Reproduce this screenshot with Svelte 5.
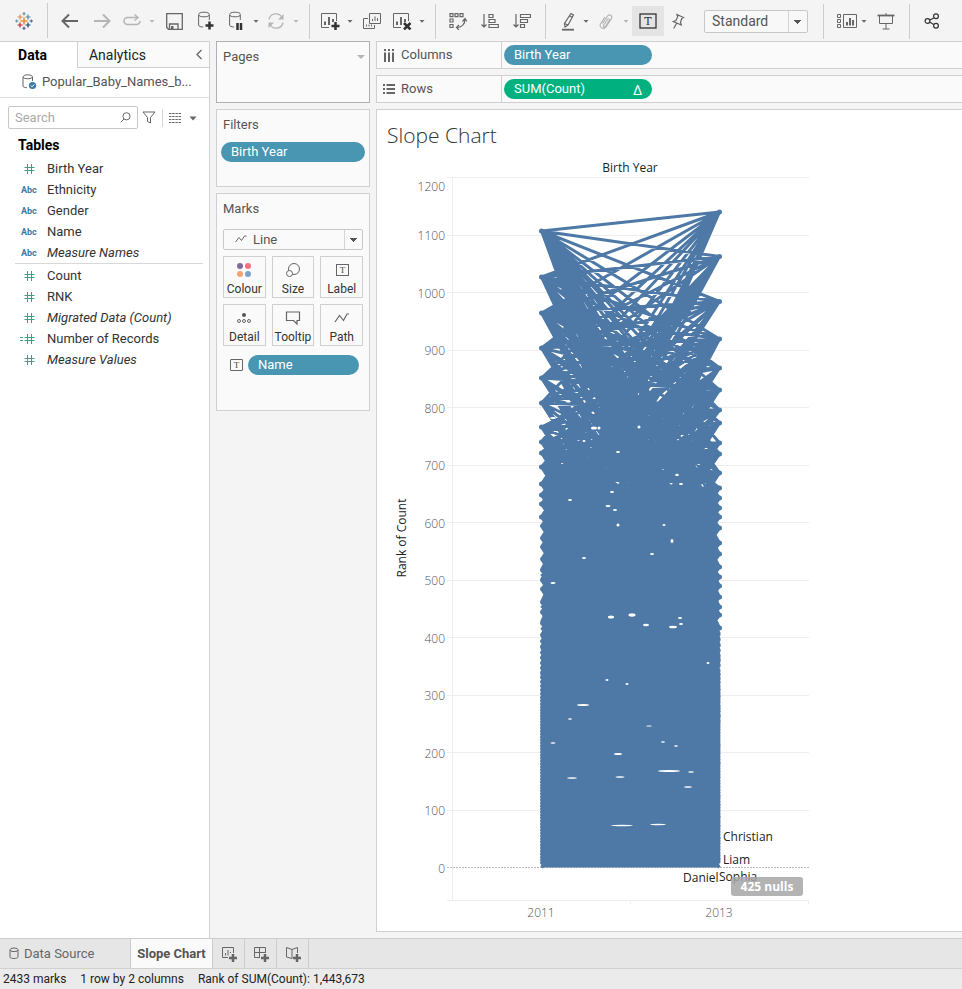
<script>
  const dimensions = [
    { name: 'Birth Year', kind: 'num' },
    { name: 'Ethnicity', kind: 'abc' },
    { name: 'Gender', kind: 'abc' },
    { name: 'Name', kind: 'abc' },
    { name: 'Measure Names', kind: 'abc', italic: true }
  ];
  const measures = [
    { name: 'Count', kind: 'num' },
    { name: 'RNK', kind: 'num' },
    { name: 'Migrated Data (Count)', kind: 'num', italic: true },
    { name: 'Number of Records', kind: 'calc' },
    { name: 'Measure Values', kind: 'num', italic: true }
  ];
  const cards = ['Colour', 'Size', 'Label', 'Detail', 'Tooltip', 'Path'];

  // Chart geometry: the plot area of the slope chart
  const X1 = 161.5, X2 = 339.5, BASE = 711.5;
  const y = (v) => BASE - v * 0.575;
  const ticks = [0, 100, 200, 300, 400, 500, 600, 700, 800, 900, 1000, 1100, 1200];

  // Rank positions in each year, from the top mark down
  const left = [75, 121, 157, 192, 222, 247, 271, 286, 297, 311, 328, 339, 348, 361, 370, 382, 391, 403, 414, 424, 433, 446, 456, 467, 479];
  const right = [56, 100.5, 145.5, 183, 212, 234, 254, 267, 287, 298, 317, 332, 342, 352, 361, 372, 387, 398, 411, 421, 430, 441, 451, 459, 472];
  const fill = (list) => {
    const out = [...list];
    let v = out[out.length - 1];
    let step = 6;
    while (v < BASE - 6) {
      v += step;
      if (step > 3) step -= 0.2;
      out.push(v);
    }
    return out;
  };
  const L = fill(left), R = fill(right);

  // Lowest rank position in the other year that each leading mark connects to
  const reachL = [561, 504, 484, 490], reachR = [466, 426, 420, 520];

  let seed = 11;
  const rnd = () => (seed = (seed * 16807) % 2147483647) / 2147483647;

  let d = '';
  L.forEach((a, i) => R.forEach((b, j) => {
    const r = rnd();
    if (b > (reachL[i] ?? a + 280) || a > (reachR[j] ?? b + 280)) return;
    const near = i + j < 6;
    const share = i < 4 || j < 4 ? 0.62 : i < 12 || j < 12 ? 0.3 : 0.38;
    if (near || r < share || Math.abs(a - b) < 12) d += `M${X1} ${a}L${X2} ${b}`;
  }));
  // Outermost line of each mark, which cuts the notches on both sides
  L.slice(0, 26).forEach((a, i) => (d += `M${X1} ${a}L${X2} ${reachL[i] ?? Math.min(a + 280, BASE)}`));
  R.slice(0, 26).forEach((b, i) => (d += `M${X2} ${b}L${X1} ${reachR[i] ?? Math.min(b + 240, BASE)}`));

  const mark = (x, list) => list.map((v) => `M${x} ${v}h0`).join('');
  const dots = mark(X1, L.slice(0, 14)) + mark(X2, R.slice(0, 25));
  const smallDots = mark(X1, L.slice(14)) + mark(X2 - 0.5, R.slice(25));

  // Gaps that stay open between the lines: x, y, half width, half height
  const gaps = [
    [204, 285, 1.5, 1], [219, 272, 1.5, 1.5], [238, 296, 2, 1], [259, 271, 1.5, 1.5], [173, 262, 3, 1], [214, 272, 3, 1.5],
    [232, 336, 2, 1], [228, 350, 2.5, 1], [235, 354, 2, 1], [190, 344, 2, 1], [297, 319, 2, 1], [301, 328, 2, 1],
    [238, 369, 1.5, 1.5], [284, 369, 1.5, 1], [292, 385, 1.5, 2], [272, 398, 2, 1], [204, 402, 2, 1], [173, 427, 2.5, 1],
    [231, 461, 3, 1.5], [252, 459, 3.5, 1.7], [266, 469, 3, 1.2], [293, 471, 4, 1.3], [300, 462, 2, 1], [301, 468, 2, 1],
    [227, 524, 1.5, 1], [247, 528, 1.5, 1], [203, 549, 6, 1], [328, 507, 1.5, 1], [190, 563, 2, 0.8],
    [173, 587, 2.5, 0.8], [238, 598, 4, 1], [283, 586, 2, 0.8], [296, 590, 2, 0.8], [269, 570, 3, 0.5],
    [289, 615, 11, 1.1], [192, 622, 5, 0.8], [240, 621, 4.5, 0.8], [311, 616, 3, 0.7], [308, 631, 4, 0.7],
    [242, 669.5, 11, 0.7], [278, 668.5, 8, 0.7]
  ];
</script>

{#snippet caret(dim)}
  <svg class="caret" class:dim width="12" height="12" viewBox="0 0 12 12"><path d="M3.500 5h5L6 7.800z" /></svg>
{/snippet}

{#snippet tIcon()}
  <svg width="14" height="14" viewBox="0 0 14 14"><rect x=".5" y="1.500" width="12" height="11" rx=".5" /><text x="6.500" y="10.400" class="glyph">T</text></svg>
{/snippet}

<div class="app">
  <header class="toolbar">
    <button class="logo" aria-label="Start page">
      <svg width="18" height="18" viewBox="0 0 18 18" stroke-width="1.200">
        <path stroke="#eb8e3b" stroke-width="1.600" d="M9 5.500v7M5.500 9h7" />
        <path stroke="#e08a4a" d="M5 2.500v5M2.500 5h5" /><path stroke="#5b879b" d="M13 2.500v5M10.500 5h5" />
        <path stroke="#c72035" d="M5 10.500v5M2.500 13h5" /><path stroke="#1f447e" d="M13 10.500v5M10.500 13h5" />
        <path stroke="#7099a5" d="M9 0v3.500M7.500 1.700h3M1.700 7.500v3M0 9h3.500" /><path stroke="#5b6591" d="M16.300 7.500v3M14.500 9H18M9 14.500V18M7.500 16.300h3" />
      </svg>
    </button>
    <div class="group">
      <button class="w32" aria-label="Undo"><svg width="18" height="16" viewBox="0 0 18 16" stroke-width="2"><path d="M17 8H2M8 1.500 1.500 8 8 14.500" /></svg></button>
      <button class="w32 off" aria-label="Redo"><svg width="18" height="16" viewBox="0 0 18 16" stroke-width="2"><path d="M1 8h15M10 1.500 16.500 8 10 14.500" /></svg></button>
      <button class="w28 off" aria-label="Replay"><svg width="20" height="16" viewBox="0 0 20 16" stroke-width="1.500"><path d="M15 4.500H5.500a3.500 3.500 0 0 0 0 7h9A3.500 3.500 0 0 0 18 8M12.500 1.500l3.500 3-3.500 3" /></svg></button>
      {@render caret(true)}
      <button class="w32" aria-label="Save"><svg width="17" height="17" viewBox="0 0 17 17"><path stroke-width="1.300" d="M.7.7h15.600v15.600H2.500L.7 14.500zM3.500 16v-5h8.500v5" /><path fill="#666" stroke="none" d="M5 13h2.500v3H5z" /></svg></button>
      <button class="w32" aria-label="New data source"><svg width="18" height="20" viewBox="0 0 18 20"><path d="M1.600 4v10c0 1.300 2 2 4.500 2M12.300 4v5" /><ellipse cx="7" cy="3.500" rx="5.300" ry="2.300" /><path class="dark" d="M12.500 10.500v8M8.500 14.500h8" /></svg></button>
      <button class="w28" aria-label="Pause updates"><svg width="18" height="20" viewBox="0 0 18 20"><path d="M2.600 4v10c0 1.300 2 2 4.500 2M13.300 4v5" /><ellipse cx="8" cy="3.500" rx="5.300" ry="2.300" /><path class="dark" d="M10.500 12v7M14 12v7" /></svg></button>
      {@render caret(false)}
      <button class="w28 off" aria-label="Refresh"><svg width="18" height="16" viewBox="0 0 18 16"><path stroke-width="1.300" d="M2 6.500A7 7 0 0 1 15 4.500M16 9.500a7 7 0 0 1-13 2" /><path d="M16.500 1v5.500H11zM1.500 15V9.500H7z" fill="#b5b5b5" stroke="none" /></svg></button>
      {@render caret(true)}
    </div>
    <div class="group">
      <button class="w28" aria-label="New worksheet"><svg width="20" height="18" viewBox="0 0 20 18"><path d="M9 15.500H1.500v-14h15V9" /><path stroke-width="2" d="M5 13V9.500M9 13V5M13 10V7" /><path class="dark" d="M15.500 10v8M11.500 14h8" /></svg></button>
      {@render caret(false)}
      <button class="w32" aria-label="Duplicate sheet"><svg width="18" height="17" viewBox="0 0 18 17"><path d="M6.500.5h11v10h-11zM5 5.500H.5v10h11V12M9.500 8V6M12 8V3.500M14.500 8V5M3.500 13.500v-2M6 13.500v-2M8.500 13.500v-2" /></svg></button>
      <button class="w28" aria-label="Clear sheet"><svg width="20" height="18" viewBox="0 0 20 18"><path d="M9 15.500H1.500v-14h15V9" /><path stroke-width="2" d="M5 13V9.500M9 13V5M13 10V7" /><path class="dark" d="m12 11 6.500 6.500m0-6.500L12 17.500" /></svg></button>
      {@render caret(false)}
    </div>
    <div class="group">
      <button class="w32" aria-label="Swap rows and columns"><svg width="18" height="18" viewBox="0 0 18 18"><path stroke-width="1.200" d="M1 1.700h3v3H1zM6 1.700h3v3H6zM11 1.700h3v3h-3zM1 7h3v3H1zM1 12.500h3v3H1zM16 7c0 5-3 8-8 8.500M13.500 9.500 16 6.500l2 3M10 13l-2.500 2.500L10 18" /></svg></button>
      <button class="w32" aria-label="Sort ascending"><svg width="18" height="17" viewBox="0 0 18 17"><path stroke-width="1.200" d="M3 1v13M.5 11.500 3 14l2.500-2.500M8 1.500h4v3H8zM8 6.500h6v3H8zM8 11.500h9.300v3H8z" /></svg></button>
      <button class="w32" aria-label="Sort descending"><svg width="18" height="17" viewBox="0 0 18 17"><path stroke-width="1.200" d="M3 1v13M.5 11.500 3 14l2.500-2.500M7.500 1.500h10v3h-10zM7.500 6.500h7v3h-7zM7.500 11.500h4v3h-4z" /></svg></button>
    </div>
    <div class="group long">
      <button class="w28 shift" aria-label="Highlight"><svg width="14" height="19" viewBox="0 0 14 19"><path stroke-width="1.200" d="M10 1.500 12.500 3 7 13l-3 2-.5-3.500zM3.500 11.500 7 13M9 4l2.500 1.500" /><path stroke-width="1.800" d="M1 17.700h12" /></svg></button>
      {@render caret(false)}
      <button class="w28 off" aria-label="Group members"><svg width="14" height="17" viewBox="0 0 14 17"><path stroke-width="1.200" d="M3.500 10.500 8.500 3c1.500-2.500 5.500-.5 4 2.500l-5.500 8.500c-2 3-7.500.5-5.500-3L6 4M9.500 5l-5 7.500c-.5 1.500 1 2.200 2 1L11 6" /></svg></button>
      {@render caret(true)}
      <button class="w32 active" aria-label="Show mark labels"><svg width="18" height="16" viewBox="0 0 18 16"><rect x="1" y="1" width="16" height="14" stroke="#333" stroke-width="1.300" /><text x="9" y="12" class="glyph big">T</text></svg></button>
      <button class="w28" aria-label="Fix axes"><svg width="14" height="17" viewBox="0 0 14 17"><path stroke-width="1.200" d="m6 1.500 6.500 3-1.700 1-1.300 3.700.8 2.800-8-3.500 2.600-1 1.800-3.800zM5.500 10.500l-2.800 5" /></svg></button>
      <select class="fit" aria-label="Fit"><option>Standard</option></select>
    </div>
    <div class="group">
      <button class="w28 cards" aria-label="Show cards"><svg width="22" height="16" viewBox="0 0 22 16"><path d="M1.500 1.500h3v3h-3zM1.500 6.500h3v3h-3zM1.500 11.500h3v3h-3zM7.500 1.500h13v13h-13z" /><path stroke-width="2" d="M11 12.500V9M14 12.500V5M17 12.500V7" /></svg></button>
      {@render caret(false)}
      <button class="w32" aria-label="Presentation mode"><svg width="18" height="17" viewBox="0 0 18 17"><path stroke-width="1.800" d="M.5 2.500h17" /><path d="M2.500 3v7.500h13V3M9 0v2M9 11v5M5.500 16h7" /></svg></button>
    </div>
    <div class="group last">
      <button class="w32" aria-label="Share"><svg class="share" width="16" height="16" viewBox="0 0 16 16"><circle cx="3.500" cy="8" r="2.400" /><circle cx="12" cy="3.300" r="2.400" /><circle cx="12" cy="12.700" r="2.400" /><path d="m6 7 3.700-2M6 9.200l3.700 2.200" /></svg></button>
    </div>
  </header>

  <main>
    <aside class="data">
      <div class="tabs">
        <button class="tab on">Data</button>
        <button class="tab">Analytics</button>
        <button class="fold" aria-label="Collapse pane"><svg width="8" height="11" viewBox="0 0 8 11"><path stroke-width="1.300" d="M6.500 1 2 5.500 6.500 10" /></svg></button>
      </div>
      <div class="source">
        <svg width="15" height="16" viewBox="0 0 15 16"><path d="M1 3v9c0 1 1.500 1.700 4 1.700M10.500 3v4" /><ellipse cx="5.800" cy="2.800" rx="4.700" ry="2" /><circle cx="10.500" cy="11.500" r="3.600" fill="#3a7ca5" stroke="none" /><path stroke="#fff" d="m8.800 11.500 1.300 1.300 2-2.300" /></svg>
        <span>Popular_Baby_Names_b...</span>
      </div>
      <div class="search">
        <label><input type="text" placeholder="Search" aria-label="Search" /><svg width="11" height="11" viewBox="0 0 11 11"><circle cx="6.500" cy="4.300" r="3.600" /><path d="M4 7 .7 10.300" /></svg></label>
        <button aria-label="Filter"><svg width="14" height="13" viewBox="0 0 14 13"><path d="M1 1h12L8.500 6.500V12l-3-1.500v-4z" /></svg></button>
        <button class="view" aria-label="View options"><svg width="12" height="10" viewBox="0 0 12 10"><path stroke-dasharray="2.400 .8" d="M0 .5h12M0 3.500h12M0 6.500h12M0 9.500h12" /></svg><svg class="caret" width="8" height="8" viewBox="0 0 8 8"><path d="M.5 2.500h7L4 6.500z" /></svg></button>
      </div>
      <h2>Tables</h2>
      {#each [dimensions, measures] as list}
        <ul>
          {#each list as f}
            <li class:italic={f.italic}>
              {#if f.kind === 'abc'}<b class="abc">Abc</b>{:else}
                <svg class="hash" width="16" height="12" viewBox="0 0 16 12"><path d="M7.500 1v10M11.500 1v10M4.500 4.500h10M4.500 7.500h10" />{#if f.kind === 'calc'}<path d="M0 4.500h3M0 7.500h3" />{/if}</svg>
              {/if}
              <span>{f.name}</span>
            </li>
          {/each}
        </ul>
      {/each}
    </aside>

    <section class="shelves">
      <div class="card pages"><h3>Pages</h3><svg class="caret dim" width="8" height="8" viewBox="0 0 8 8"><path d="M0 2h8L4 6z" /></svg></div>
      <div class="card filters"><h3>Filters</h3><button class="pill blue">Birth Year</button></div>
      <div class="card marks">
        <h3>Marks</h3>
        <div class="marktype">
          <svg width="12" height="8" viewBox="0 0 12 8"><path d="M.5 7 4 2.500l2.500 3L9.500 1h2" /></svg>
          <select aria-label="Mark type"><option>Line</option></select>
        </div>
        <div class="grid">
          {#each cards as c}
            <button>
              <svg width="16" height="16" viewBox="0 0 16 16">
                {#if c === 'Colour'}<g stroke="none"><circle cx="4" cy="4" r="3" fill="#80699b" /><circle cx="12" cy="4" r="3" fill="#fa6e80" /><circle cx="4" cy="12" r="3" fill="#f5a472" /><circle cx="12" cy="12" r="3" fill="#7fa1cc" /></g>
                {:else if c === 'Size'}<circle cx="9" cy="7" r="5.500" /><circle cx="4.500" cy="11.500" r="3" fill="#fafafa" />
                {:else if c === 'Label'}<rect x="2.500" y="2.500" width="12" height="11" /><text x="8.500" y="11.400" class="glyph">T</text>
                {:else if c === 'Detail'}<circle cx="8" cy="5" r="2" fill="#555" stroke="none" /><circle cx="3" cy="11" r="1.500" /><circle cx="8" cy="11" r="1.500" /><circle cx="13" cy="11" r="1.500" />
                {:else if c === 'Tooltip'}<path stroke-width="1.200" d="M1.500 2h13v8.500H12v3.500l-3.500-3.500h-7z" />
                {:else}<path stroke-width="1.200" d="M1 12 5.500 5.500l4 5L13 4h2" />{/if}
              </svg>
              {c}
            </button>
          {/each}
        </div>
        <div class="encoding">{@render tIcon()}<button class="pill blue">Name</button></div>
      </div>
    </section>

    <section class="work">
      <div class="shelf">
        <div class="shelfname"><svg width="12" height="13" viewBox="0 0 12 13" stroke-width="2"><path d="M2 0v2M6 0v2M10 0v2M2 3.500V13M6 3.500V13M10 3.500V13" /></svg>Columns</div>
        <button class="pill blue">Birth Year</button>
      </div>
      <div class="shelf">
        <div class="shelfname"><svg width="12" height="10" viewBox="0 0 12 10" stroke-width="2"><path d="M0 1h2M0 5h2M0 9h2M3.500 1H12M3.500 5H12M3.500 9H12" /></svg>Rows</div>
        <button class="pill green">SUM(Count)<span class="delta">Δ</span></button>
      </div>
      <div class="sheet">
        <h1>Slope Chart</h1>
        <svg class="chart" width="440" height="770" viewBox="0 0 440 770" role="img" aria-label="Slope chart of rank of count by birth year">
          <g class="lines">
            <path d="M67 21.500h362M72.500 21.500v723M67 744.500h362M250.500 744v4M428.500 744v4" />
            {#each ticks.slice(1, 12) as t}<path d="M67 {Math.floor(y(t)) + 0.5}h362" />{/each}
          </g>
          <path class="zero" d="M67 {BASE}h362" />
          <text class="head" x="250" y="16" text-anchor="middle">Birth Year</text>
          <g class="tick" text-anchor="end">
            {#each ticks as t}<text x="65" y={t === 1200 ? 35 : y(t) + 5}>{t}</text>{/each}
          </g>
          <text class="head" transform="translate(26 382) rotate(-90)" text-anchor="middle">Rank of Count</text>
          <g class="marksline">
            <path class="solid" d="M{X1 + 10} {y(620)}L{X2 - 10} {y(620)}L{X2 - 1} {y(400)}V{BASE}H{X1}V{y(400)}z" />
            <path {d} />
            <path class="dots" d={dots} />
            <path class="dots small" d={smallDots} />
          </g>
          <g class="gaps">{#each gaps as g}<ellipse cx={g[0]} cy={g[1]} rx={g[2]} ry={g[3]} />{/each}</g>
          <g class="name"><text x="343" y="685">Christian</text><text x="343" y="708">Liam</text><text x="303" y="726">Daniel</text><text x="339" y="725">Sophia</text></g>
          <rect class="badge" x="351" y="721" width="72" height="19" rx="3" />
          <text class="nulls" x="387" y="735" text-anchor="middle">425 nulls</text>
          <g class="tick" text-anchor="middle"><text x="161" y="761">2011</text><text x="339" y="761">2013</text></g>
        </svg>
      </div>
    </section>
  </main>

  <nav class="sheets">
    <button class="ds"><svg width="10" height="13" viewBox="0 0 10 13"><path d="M1 3v7c0 2 8 2 8 0V3" /><ellipse cx="5" cy="2.800" rx="4" ry="1.800" /></svg>Data Source</button>
    <button class="current">Slope Chart</button>
    <button class="new" aria-label="New worksheet"><svg width="16" height="16" viewBox="0 0 16 16"><path d="M7 11.500H1.500v-10h11V7M4.500 9.500V7M7 9.500V4M9.500 7V6" /><path class="plus" d="M12 8v8M8 12h8" /></svg></button>
    <button class="new" aria-label="New dashboard"><svg width="16" height="16" viewBox="0 0 16 16"><path d="M7 11.500H1.500v-10h11V7M1 6.500h11.500M6.500 1v10.500" /><path class="plus" d="M12 8v8M8 12h8" /></svg></button>
    <button class="new" aria-label="New story"><svg width="16" height="16" viewBox="0 0 16 16"><path d="M7 12.500 1.500 11V1.500l5.500 2 5.500-2V7M7 3.500v9" /><path class="plus" d="M12 8v8M8 12h8" /></svg></button>
  </nav>
  <footer><span>2433 marks</span><span>1 row by 2 columns</span><span>Rank of SUM(Count): 1,443,673</span></footer>
</div>

<style>
  .app {
    display: flex;
    flex-direction: column;
    min-height: 100vh;
    background: #f4f4f4;
    color: #333;
    font: 13px/20px Roboto, sans-serif;
  }
  .app * { box-sizing: border-box; }
  button, input, select { font: inherit; color: inherit; }
  button { display: flex; align-items: center; justify-content: center; border: 0; padding: 0; background: none; }
  svg { fill: none; stroke: #666; flex: none; }
  .dark { stroke: #333; stroke-width: 2.500; }
  .caret { stroke: none; fill: #666; }
  .caret.dim { fill: #b5b5b5; }
  .glyph { font: 9px "Liberation Serif", serif; text-anchor: middle; stroke: none; fill: #444; }
  .glyph.big { font: 11px "DejaVu Serif", serif; fill: #333; }

  .toolbar { display: flex; height: 41px; align-items: center; padding-top: 1px; }
  .logo { width: 48px; height: 35px; margin-top: -1px; border-right: 1px solid #ccc; }
  .group { display: flex; align-items: center; height: 35px; padding: 0 7px 0 6px; border-right: 1px solid #ccc; }
  .group.long { padding-right: 15px; }
  .group.last { border: 0; }
  .w28 { width: 28px; height: 30px; }
  .w32 { width: 32px; height: 30px; }
  .shift { padding-left: 4px; }
  .cards { justify-content: flex-end; }
  .off svg { stroke: #b5b5b5; }
  .off svg.caret { stroke: none; }
  .active { background: #e4e4e4; }
  .share { stroke: #333; stroke-width: 1.200; }
  select { appearance: none; border: 1px solid #c8c8c8; border-radius: 2px; }
  .fit {
    width: 104px;
    height: 23px;
    margin-left: 12px;
    padding: 0 7px;
    font-size: 14px;
    color: #555;
    background:
      linear-gradient(#d4d4d4, #d4d4d4) right 18px top / 1px 100% no-repeat,
      linear-gradient(#555, #555) right 6px top 9px / 7px 1px no-repeat,
      linear-gradient(#555, #555) right 7px top 10px / 5px 1px no-repeat,
      linear-gradient(#555, #555) right 8px top 11px / 3px 1px no-repeat,
      linear-gradient(#555, #555) right 9px top 12px / 1px 1px no-repeat,
      #f8f8f8;
  }

  main { display: flex; flex: 1; min-height: 0; }
  .data { width: 210px; flex: none; background: #fff; border-right: 1px solid #d0d0d0; border-top: 1px solid #d0d0d0; }
  .tabs { display: flex; height: 26px; font-size: 14px; }
  .tab { width: 77px; color: #222; }
  .tab.on { font-weight: bold; color: #000; padding-right: 12px; }
  .tab:not(.on), .fold { background: #fafafa; border-bottom: 1px solid #d0d0d0; }
  .tab:not(.on) { border-left: 1px solid #d0d0d0; width: 80px; }
  .fold { flex: 1; justify-content: flex-end; padding-right: 6px; }
  .source { display: flex; align-items: center; gap: 5px; height: 30px; padding: 0 0 1px 22px; border-bottom: 1px solid #e0e0e0; color: #555; }
  .search { display: flex; align-items: center; height: 39px; padding-left: 8px; }
  .search label { position: relative; width: 130px; height: 23px; }
  .search label svg { position: absolute; right: 7px; top: 6px; }
  .search input { width: 100%; height: 100%; border: 1px solid #c8c8c8; border-radius: 2px; padding: 0 6px; }
  .search input::placeholder { color: #aaa; opacity: 1; }
  .search > button { margin-left: 4px; height: 18px; }
  .search > .view { gap: 8px; border-left: 1px solid #d4d4d4; padding-left: 6px; margin-left: 6px; }
  h1, h2, h3 { margin: 0; }
  h2 { padding-left: 18px; font-size: 14px; line-height: 16px; color: #000; margin-bottom: 5px; }
  ul { list-style: none; margin: 0 6px 0 15px; padding: 0; }
  ul + ul { border-top: 1px solid #d8d8d8; padding-top: 1px; }
  li { display: flex; align-items: center; height: 21px; }
  li > span { margin-left: 11px; }
  .abc { width: 21px; padding-left: 6px; font: bold 9px/20px Roboto, sans-serif; color: #3a7ca5; }
  .hash { stroke: #3aa283; margin-left: 5px; stroke-width: 1; }
  .italic span { font-style: italic; }

  .shelves { width: 154px; flex: none; margin-left: 6px; display: flex; flex-direction: column; gap: 6px; }
  .card { background: #fafafa; border: 1px solid #d0d0d0; padding: 5px 4px; }
  .card h3 { font-size: 13px; font-weight: normal; color: #555; padding-left: 2px; }
  .pages { height: 62px; border-color: #b0b0b0; display: flex; justify-content: space-between; }
  .pages .caret { margin-top: 6px; }
  .filters { height: 78px; }
  .filters .pill { margin-top: 7px; }
  .pill { width: 148px; height: 20px; border-radius: 10px; padding: 0 10px; justify-content: space-between; color: #fff; }
  .card .pill { width: 100%; }
  .delta { font: 15px/20px "Open Sans", sans-serif; }
  .blue { background: #4996b2; }
  .green { background: #00b180; }
  .marks { height: 218px; padding: 5px 6px; }
  .marks h3 { padding-left: 0; }
  .marktype { position: relative; margin: 10px 0 6px; height: 21px; }
  .marktype svg { position: absolute; left: 12px; top: 6px; z-index: 1; }
  .marktype select {
    display: block;
    width: 100%;
    height: 100%;
    padding: 0 29px;
    color: #555;
    background:
      linear-gradient(#d4d4d4, #d4d4d4) right 17px top / 1px 100% no-repeat,
      linear-gradient(#555, #555) right 5px top 8px / 7px 1px no-repeat,
      linear-gradient(#555, #555) right 6px top 9px / 5px 1px no-repeat,
      linear-gradient(#555, #555) right 7px top 10px / 3px 1px no-repeat,
      linear-gradient(#555, #555) right 8px top 11px / 1px 1px no-repeat,
      #fafafa;
  }
  .grid { display: grid; grid-template-columns: repeat(3, 1fr); gap: 6px; }
  .grid button { flex-direction: column; height: 42px; font-size: 12px; line-height: 18px; border: 1px solid #d0d0d0; padding-top: 5px; gap: 2px; color: #333; }
  .encoding { display: flex; align-items: center; gap: 4px; margin-top: 9px; padding: 0 4px 0 7px; }

  .work { flex: 1; min-width: 0; margin-left: 6px; display: flex; flex-direction: column; }
  .shelf { display: flex; align-items: center; height: 28px; margin-bottom: 6px; border: 1px solid #d0d0d0; border-right: 0; background: #fafafa; }
  .shelfname { display: flex; align-items: center; gap: 6px; width: 125px; height: 100%; padding-left: 6px; margin-right: 2px; border-right: 1px solid #d0d0d0; color: #555; }
  .sheet { flex: 1; border: 1px solid #d0d0d0; border-right: 0; background: #fff; margin-bottom: 6px; padding: 11px 3px 0; }
  h1 { font: 300 21px/28px "Open Sans", sans-serif; padding-left: 7px; margin-bottom: 7px; color: #333; }
  .chart { display: block; max-width: 100%; font: 12px "Open Sans", sans-serif; }
  .chart text { stroke: none; fill: #222; }
  .lines { stroke: #eee; }
  .zero { stroke: #bbb; stroke-dasharray: 2 1; }
  .chart .tick text { fill: #555; font-weight: 300; font-size: 12px; }
  .chart .nulls { fill: #fff; font-weight: bold; }
  .badge { fill: #a6a6a6; fill-opacity: .85; stroke: none; }
  .marksline { stroke: #4e79a7; stroke-width: 3; }
  .marksline .solid { fill: #4e79a7; stroke: none; }
  .dots { stroke-width: 5; stroke-linecap: round; }
  .dots.small { stroke-width: 3; }
  .gaps { fill: #fff; stroke: none; }

  .sheets { display: flex; height: 31px; background: #e6e6e6; border-top: 1px solid #ccc; border-bottom: 1px solid #d0d0d0; }
  .sheets button { border-right: 1px solid #ccc; color: #666; }
  .sheets .ds { width: 131px; justify-content: flex-start; padding-left: 9px; gap: 5px; }
  .sheets .current { width: 82px; background: #fafafa; font-weight: bold; color: #555; }
  .sheets .new { width: 32px; }
  .plus { stroke-width: 2.500; }
  footer { display: flex; gap: 14px; height: 20px; padding-left: 3px; font-size: 12px; background: #ebebeb; color: #222; }
</style>
